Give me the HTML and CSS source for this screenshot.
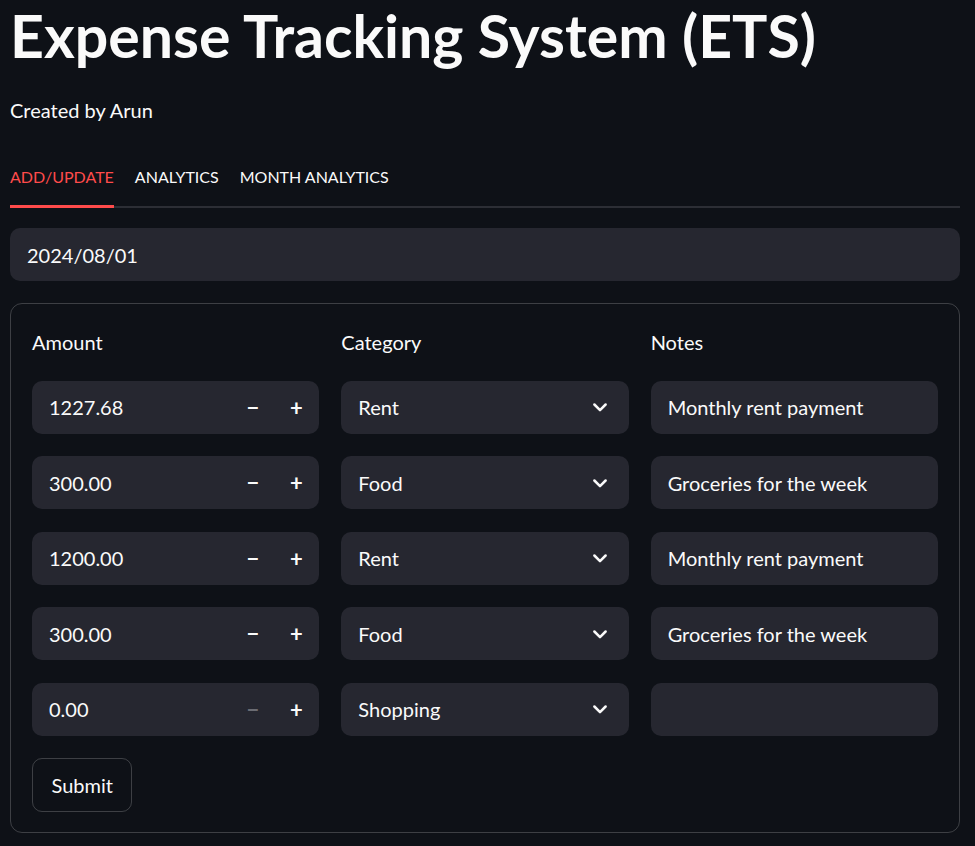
FILE: index.html
```html
<!DOCTYPE html>
<html>
<head>
<meta charset="utf-8">
<link rel="stylesheet" href="styles.css">
</head>
<body>
<main class="page">
  <h1 class="title">Expense Tracking System (ETS)</h1>
  <p class="byline">Created by Arun</p>
  <nav class="tabs">
    <div class="tab active">ADD/UPDATE</div>
    <div class="tab">ANALYTICS</div>
    <div class="tab">MONTH ANALYTICS</div>
  </nav>
  <div class="field date">2024/08/01</div>
  <form class="form">
    <div class="grid">
      <div class="label">Amount</div>
      <div class="label">Category</div>
      <div class="label">Notes</div>

      <div class="field num"><span class="val">1227.68</span><span class="step">−</span><span class="step">+</span></div>
      <div class="field sel"><span class="val">Rent</span><svg class="chev" viewBox="0 0 16 16"><path d="M3.5 6 8 10.5 12.5 6" /></svg></div>
      <div class="field">Monthly rent payment</div>

      <div class="field num"><span class="val">300.00</span><span class="step">−</span><span class="step">+</span></div>
      <div class="field sel"><span class="val">Food</span><svg class="chev" viewBox="0 0 16 16"><path d="M3.5 6 8 10.5 12.5 6" /></svg></div>
      <div class="field">Groceries for the week</div>

      <div class="field num"><span class="val">1200.00</span><span class="step">−</span><span class="step">+</span></div>
      <div class="field sel"><span class="val">Rent</span><svg class="chev" viewBox="0 0 16 16"><path d="M3.5 6 8 10.5 12.5 6" /></svg></div>
      <div class="field">Monthly rent payment</div>

      <div class="field num"><span class="val">300.00</span><span class="step">−</span><span class="step">+</span></div>
      <div class="field sel"><span class="val">Food</span><svg class="chev" viewBox="0 0 16 16"><path d="M3.5 6 8 10.5 12.5 6" /></svg></div>
      <div class="field">Groceries for the week</div>

      <div class="field num"><span class="val">0.00</span><span class="step disabled">−</span><span class="step">+</span></div>
      <div class="field sel"><span class="val">Shopping</span><svg class="chev" viewBox="0 0 16 16"><path d="M3.5 6 8 10.5 12.5 6" /></svg></div>
      <div class="field"></div>
    </div>
    <div class="btn">Submit</div>
  </form>
</main>
</body>
</html>
```

FILE: styles.css
```css
* { box-sizing: border-box; }
html, body { margin: 0; padding: 0; background: #0e1117; }
body {
  color: #fafafa;
  font-family: "Lato", "Noto Sans", sans-serif;
  font-size: 20px;
}
.page {
  padding: 0 15px 0 10px;
  display: flex;
  flex-direction: column;
}
.title {
  margin: 0;
  font-size: 59px;
  font-weight: 700;
  line-height: 71px;
  letter-spacing: 0;
}
.byline {
  margin: 23px 0 0;
  line-height: 32px;
}
.tabs {
  margin-top: 40px;
  display: flex;
  gap: 21px;
  border-bottom: 2px solid #2c2e35;
}
.tab {
  font-size: 16px;
  line-height: 22px;
  padding-bottom: 17px;
  margin-bottom: -2px;
  border-bottom: 3px solid transparent;
}
.tab.active {
  color: #ff4b4b;
  border-bottom-color: #ff4b4b;
}
.field {
  background: #262730;
  border-radius: 10px;
  height: 53px;
  display: flex;
  align-items: center;
  padding: 0 17px;
  font-size: 20px;
}
.date { margin-top: 20px; height: 53px; }
.form {
  margin: 22px 0 0;
  border: 1px solid rgba(250, 250, 250, 0.2);
  border-radius: 12px;
  padding: 22px 21px 20px;
  display: flex;
  flex-direction: column;
  align-items: flex-start;
}
.grid {
  align-self: stretch;
  display: grid;
  grid-template-columns: repeat(3, 1fr);
  column-gap: 22px;
  row-gap: 22.5px;
}
.label {
  line-height: 32px;
  margin-bottom: 0;
}
.val { flex: 1; }
.step {
  width: 43px;
  text-align: center;
  font-weight: 700;
  font-size: 22px;
}
.num { padding-right: 0; }
.step:last-child { width: 44px; margin-right: 1px; }
.step.disabled { color: #6b6c73; }
.chev {
  width: 20px;
  height: 20px;
  fill: none;
  stroke: #fafafa;
  stroke-width: 2;
  stroke-linecap: round;
  stroke-linejoin: round;
  margin-right: 2px;
}
.btn {
  margin-top: 22px;
  height: 54px;
  padding: 0 18.5px;
  display: flex;
  align-items: center;
  border: 1px solid rgba(250, 250, 250, 0.2);
  border-radius: 10px;
}
```
